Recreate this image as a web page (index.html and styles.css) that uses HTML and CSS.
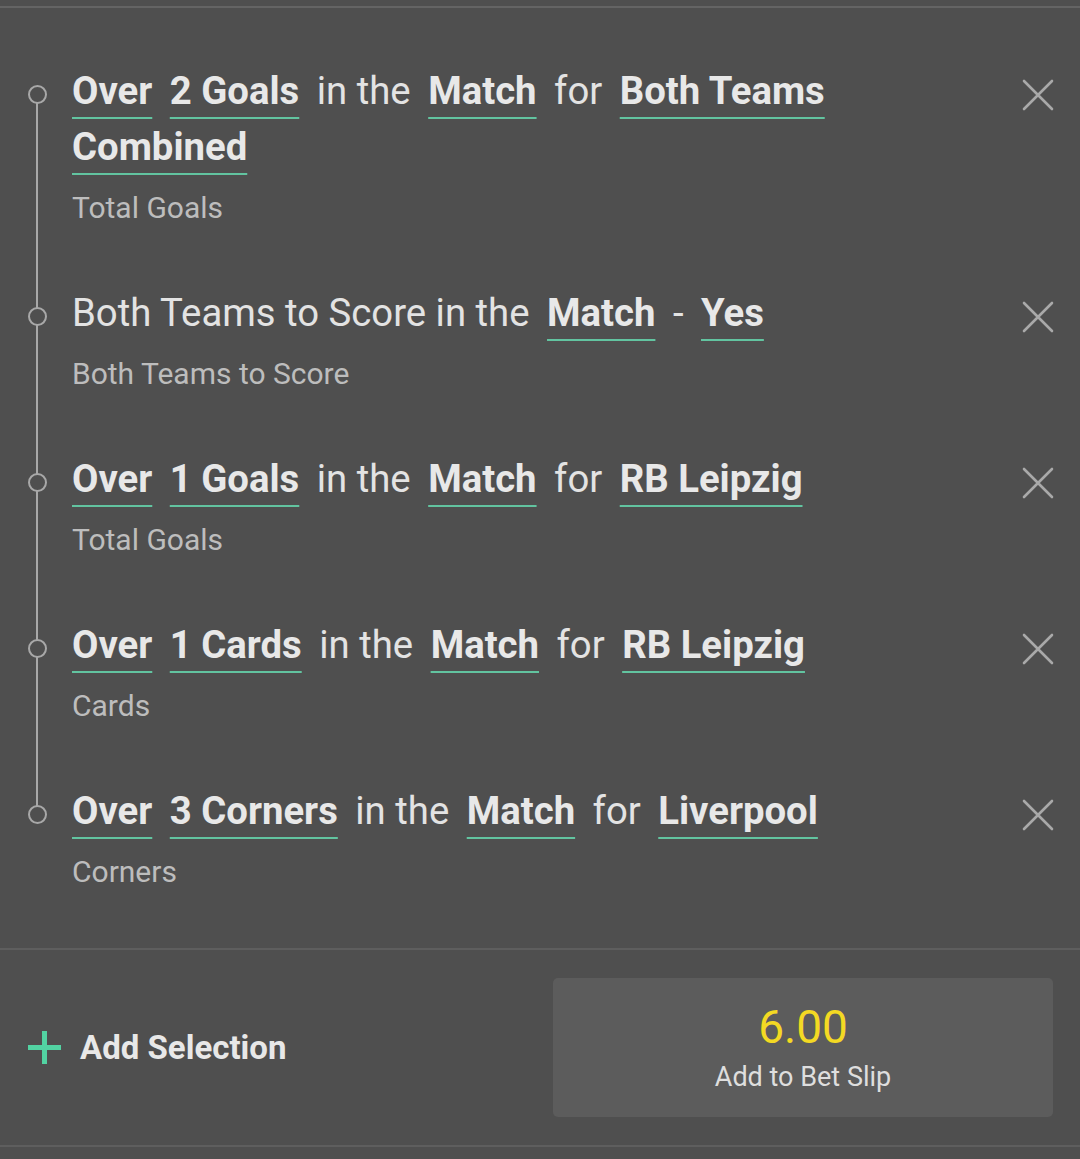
FILE: index.html
```html
<!DOCTYPE html>
<html lang="en">
<head>
<meta charset="utf-8">
<title>Bet Builder</title>
<link rel="stylesheet" href="styles.css">
</head>
<body>
<div class="topgap"></div>
<main class="panel">
  <section class="list">
    <div class="row">
      <div class="marker"><span class="dot"></span></div>
      <div class="body">
        <p class="title"><span class="k">Over</span> <span class="k">2 Goals</span> <span class="t">in the</span> <span class="k">Match</span> <span class="t">for</span> <span class="k">Both Teams Combined</span></p>
        <p class="sub">Total Goals</p>
      </div>
      <button class="close" aria-label="Remove"><svg viewBox="0 0 32 32" width="32" height="32"><path d="M2 2 L30 30 M30 2 L2 30"/></svg></button>
    </div>
    <div class="row">
      <div class="marker"><span class="dot"></span></div>
      <div class="body">
        <p class="title"><span class="t">Both Teams to Score in the</span> <span class="k">Match</span> <span class="t">-</span> <span class="k">Yes</span></p>
        <p class="sub">Both Teams to Score</p>
      </div>
      <button class="close" aria-label="Remove"><svg viewBox="0 0 32 32" width="32" height="32"><path d="M2 2 L30 30 M30 2 L2 30"/></svg></button>
    </div>
    <div class="row">
      <div class="marker"><span class="dot"></span></div>
      <div class="body">
        <p class="title"><span class="k">Over</span> <span class="k">1 Goals</span> <span class="t">in the</span> <span class="k">Match</span> <span class="t">for</span> <span class="k">RB Leipzig</span></p>
        <p class="sub">Total Goals</p>
      </div>
      <button class="close" aria-label="Remove"><svg viewBox="0 0 32 32" width="32" height="32"><path d="M2 2 L30 30 M30 2 L2 30"/></svg></button>
    </div>
    <div class="row">
      <div class="marker"><span class="dot"></span></div>
      <div class="body">
        <p class="title"><span class="k">Over</span> <span class="k">1 Cards</span> <span class="t">in the</span> <span class="k">Match</span> <span class="t">for</span> <span class="k">RB Leipzig</span></p>
        <p class="sub">Cards</p>
      </div>
      <button class="close" aria-label="Remove"><svg viewBox="0 0 32 32" width="32" height="32"><path d="M2 2 L30 30 M30 2 L2 30"/></svg></button>
    </div>
    <div class="row">
      <div class="marker"><span class="dot"></span></div>
      <div class="body">
        <p class="title"><span class="k">Over</span> <span class="k">3 Corners</span> <span class="t">in the</span> <span class="k">Match</span> <span class="t">for</span> <span class="k">Liverpool</span></p>
        <p class="sub">Corners</p>
      </div>
      <button class="close" aria-label="Remove"><svg viewBox="0 0 32 32" width="32" height="32"><path d="M2 2 L30 30 M30 2 L2 30"/></svg></button>
    </div>
  </section>
  <footer class="footer">
    <button class="add">
      <span class="plus"></span>
      <span class="add-label">Add Selection</span>
    </button>
    <button class="betslip">
      <span class="odds">6.00</span>
      <span class="bs-label">Add to Bet Slip</span>
    </button>
  </footer>
</main>
</body>
</html>
```
FILE: styles.css
```css
* { box-sizing: border-box; }
html, body {
  margin: 0;
  padding: 0;
  background: #4f4f4f;
  font-family: Roboto, "Liberation Sans", sans-serif;
  width: 1080px;
  height: 1159px;
  overflow: hidden;
}
.topgap { height: 6px; }
.panel {
  border-top: 2px solid #646464;
}
.list {
  padding: 55px 0 58px 0;
  display: flex;
  flex-direction: column;
  gap: 59px;
}
.row {
  position: relative;
  display: grid;
  grid-template-columns: 72px 1fr 32px;
  padding-right: 26px;
}
.row:not(:last-child)::after {
  content: "";
  position: absolute;
  left: 36px;
  width: 2px;
  top: 31px;
  bottom: -90px;
  background: #a8a8a8;
}
.marker { position: relative; z-index: 1; }
.dot {
  display: block;
  width: 19px;
  height: 19px;
  margin: 22px 0 0 28px;
  border: 2px solid #a8a8a8;
  border-radius: 50%;
  background: #4f4f4f;
}
.body { padding-right: 30px; }
.title {
  margin: 0;
  font-size: 38.3px;
  line-height: 56px;
  color: #e3e3e3;
}
.k, .t { margin-right: 8px; }
.k {
  font-weight: 700;
  color: #e8e8e8;
  text-decoration: underline;
  text-decoration-color: #62c4a0;
  text-decoration-thickness: 2px;
  text-underline-offset: 13px;
}
.sub {
  margin: 15px 0 0 0;
  font-size: 30px;
  line-height: 36px;
  color: #bdbdbd;
}
.close {
  margin: 16px 0 0 0;
  padding: 0;
  border: 0;
  background: none;
  width: 32px;
  height: 32px;
  align-self: start;
}
.close svg { display: block; }
.close path {
  stroke: #a9a9a9;
  stroke-width: 2.6;
  fill: none;
  stroke-linecap: round;
}
.footer {
  border-top: 2px solid #5e5e5e;
  border-bottom: 2px solid #5e5e5e;
  display: flex;
  align-items: center;
  justify-content: space-between;
  padding: 28px 27px 28px 28px;
}
.add {
  display: flex;
  align-items: center;
  gap: 19px;
  background: none;
  border: 0;
  padding: 0;
  font-family: inherit;
}
.plus {
  position: relative;
  width: 33px;
  height: 33px;
}
.plus::before, .plus::after {
  content: "";
  position: absolute;
  background: #52d3a2;
}
.plus::before { left: 14px; top: 0; width: 5px; height: 33px; }
.plus::after { top: 14px; left: 0; height: 5px; width: 33px; }
.add-label {
  font-size: 33px;
  font-weight: 700;
  color: #e8e8e8;
}
.betslip {
  width: 500px;
  height: 139px;
  background: #5c5c5c;
  border: 0;
  border-radius: 5px;
  display: flex;
  flex-direction: column;
  align-items: center;
  justify-content: center;
  gap: 8px;
  font-family: inherit;
}
.odds {
  font-size: 46px;
  line-height: 50px;
  color: #f3d923;
}
.bs-label {
  font-size: 27px;
  line-height: 34px;
  color: #dedede;
}
```
